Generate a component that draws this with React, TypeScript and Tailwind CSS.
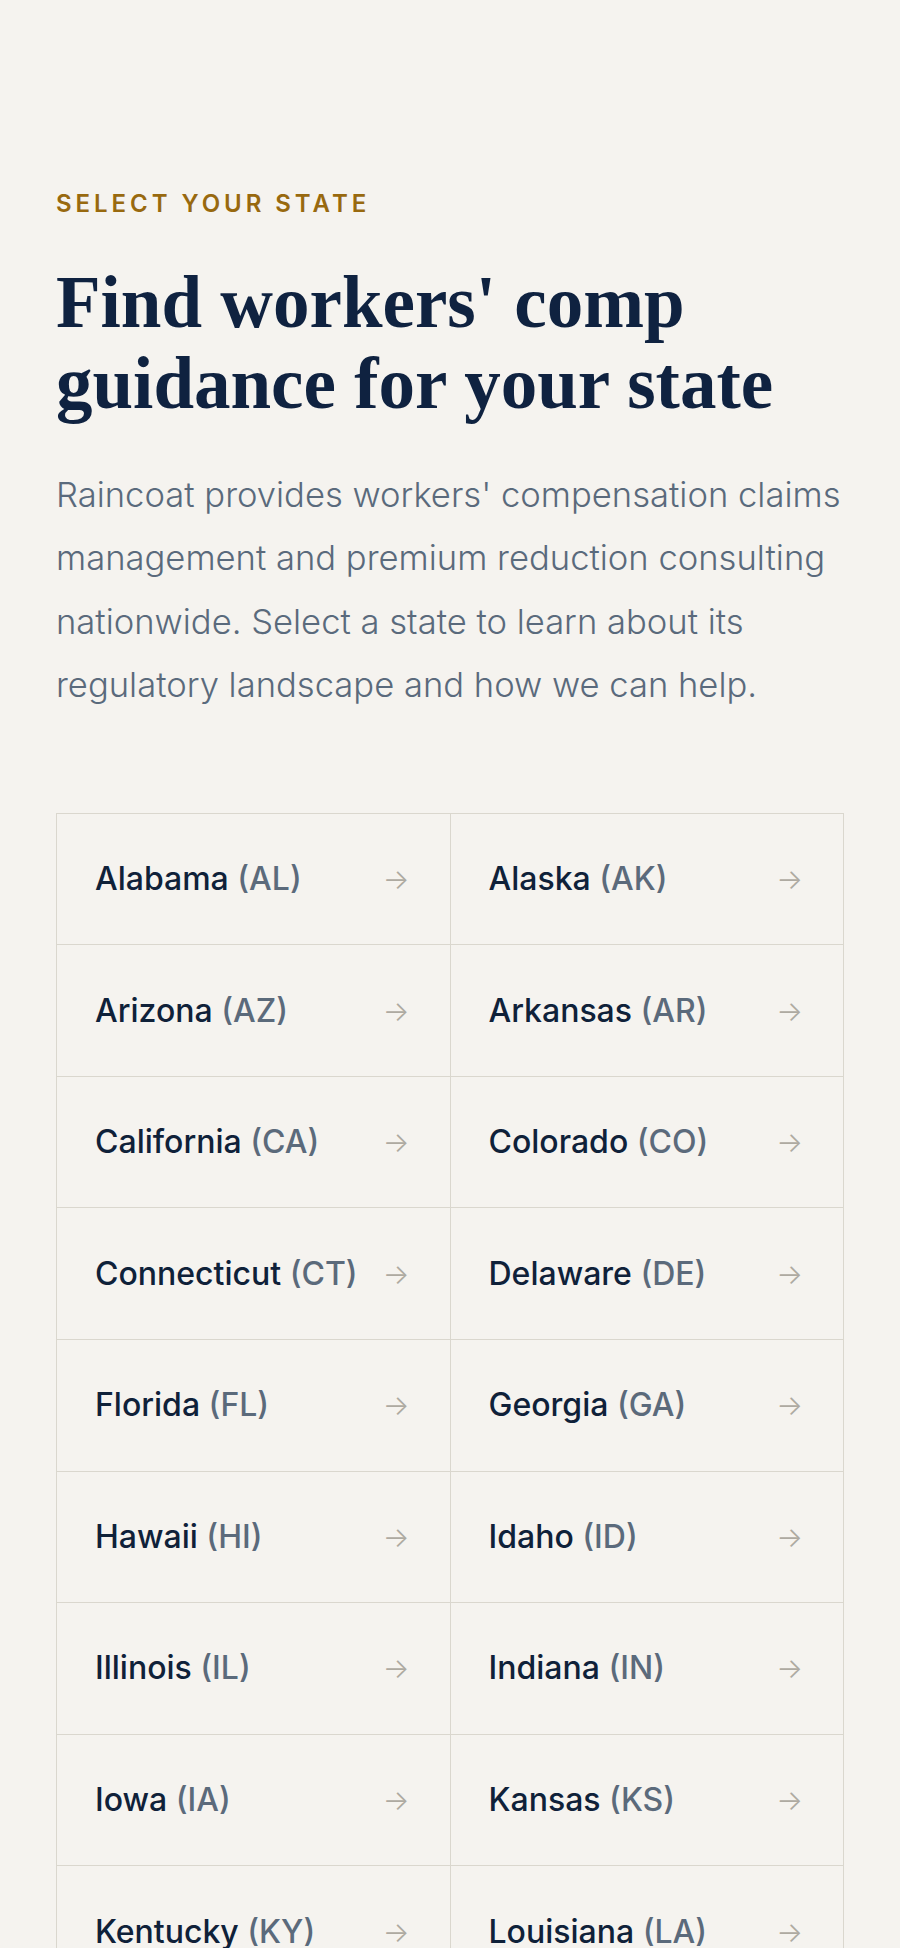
import React from 'react';

const STATES: [string, string][] = [
  ['Alabama', 'AL'], ['Alaska', 'AK'], ['Arizona', 'AZ'], ['Arkansas', 'AR'],
  ['California', 'CA'], ['Colorado', 'CO'], ['Connecticut', 'CT'], ['Delaware', 'DE'],
  ['Florida', 'FL'], ['Georgia', 'GA'], ['Hawaii', 'HI'], ['Idaho', 'ID'],
  ['Illinois', 'IL'], ['Indiana', 'IN'], ['Iowa', 'IA'], ['Kansas', 'KS'],
  ['Kentucky', 'KY'], ['Louisiana', 'LA'], ['Maine', 'ME'], ['Maryland', 'MD'],
  ['Massachusetts', 'MA'], ['Michigan', 'MI'], ['Minnesota', 'MN'], ['Mississippi', 'MS'],
  ['Missouri', 'MO'], ['Montana', 'MT'], ['Nebraska', 'NE'], ['Nevada', 'NV'],
  ['New Hampshire', 'NH'], ['New Jersey', 'NJ'], ['New Mexico', 'NM'], ['New York', 'NY'],
  ['North Carolina', 'NC'], ['North Dakota', 'ND'], ['Ohio', 'OH'], ['Oklahoma', 'OK'],
  ['Oregon', 'OR'], ['Pennsylvania', 'PA'], ['Rhode Island', 'RI'], ['South Carolina', 'SC'],
  ['South Dakota', 'SD'], ['Tennessee', 'TN'], ['Texas', 'TX'], ['Utah', 'UT'],
  ['Vermont', 'VT'], ['Virginia', 'VA'], ['Washington', 'WA'], ['West Virginia', 'WV'],
  ['Wisconsin', 'WI'], ['Wyoming', 'WY'],
];

function StateCell({ name, code }: { name: string; code: string }) {
  return (
    <a
      href="#"
      className="flex h-[131.6px] items-center justify-between border-r border-b border-[#dad7ce] pl-[38px] pr-[40px] text-[32px] font-medium"
    >
      <span className="text-[#0f2139]">
        {name} <span className="text-[#5b6a7b]">({code})</span>
      </span>
      <span className="text-[28px] font-light text-[#aeaaa1]">→</span>
    </a>
  );
}

export default function App() {
  return (
    <div className="min-h-screen bg-[#f5f3ef] px-[56px] pt-[187px] pb-[120px] font-['Inter',sans-serif]">
      <p className="text-[24px] leading-[34px] font-semibold uppercase tracking-[0.165em] text-[#98690f]">
        Select your state
      </p>
      <h1 className="mt-[41px] font-['Liberation_Serif',serif] text-[73px] leading-[81px] font-bold text-[#0f2240]">
        Find workers' comp guidance for your state
      </h1>
      <p className="mt-[39px] text-[34.6px] leading-[63.4px] font-light text-[#5a6a7c]">
        Raincoat provides workers' compensation claims management and premium reduction consulting
        nationwide. Select a state to learn about its regulatory landscape and how we can help.
      </p>

      <div className="mt-[96px] grid grid-cols-2 border-t border-l border-[#dad7ce]">
        {STATES.map(([name, code]) => (
          <StateCell key={code} name={name} code={code} />
        ))}
      </div>
    </div>
  );
}
